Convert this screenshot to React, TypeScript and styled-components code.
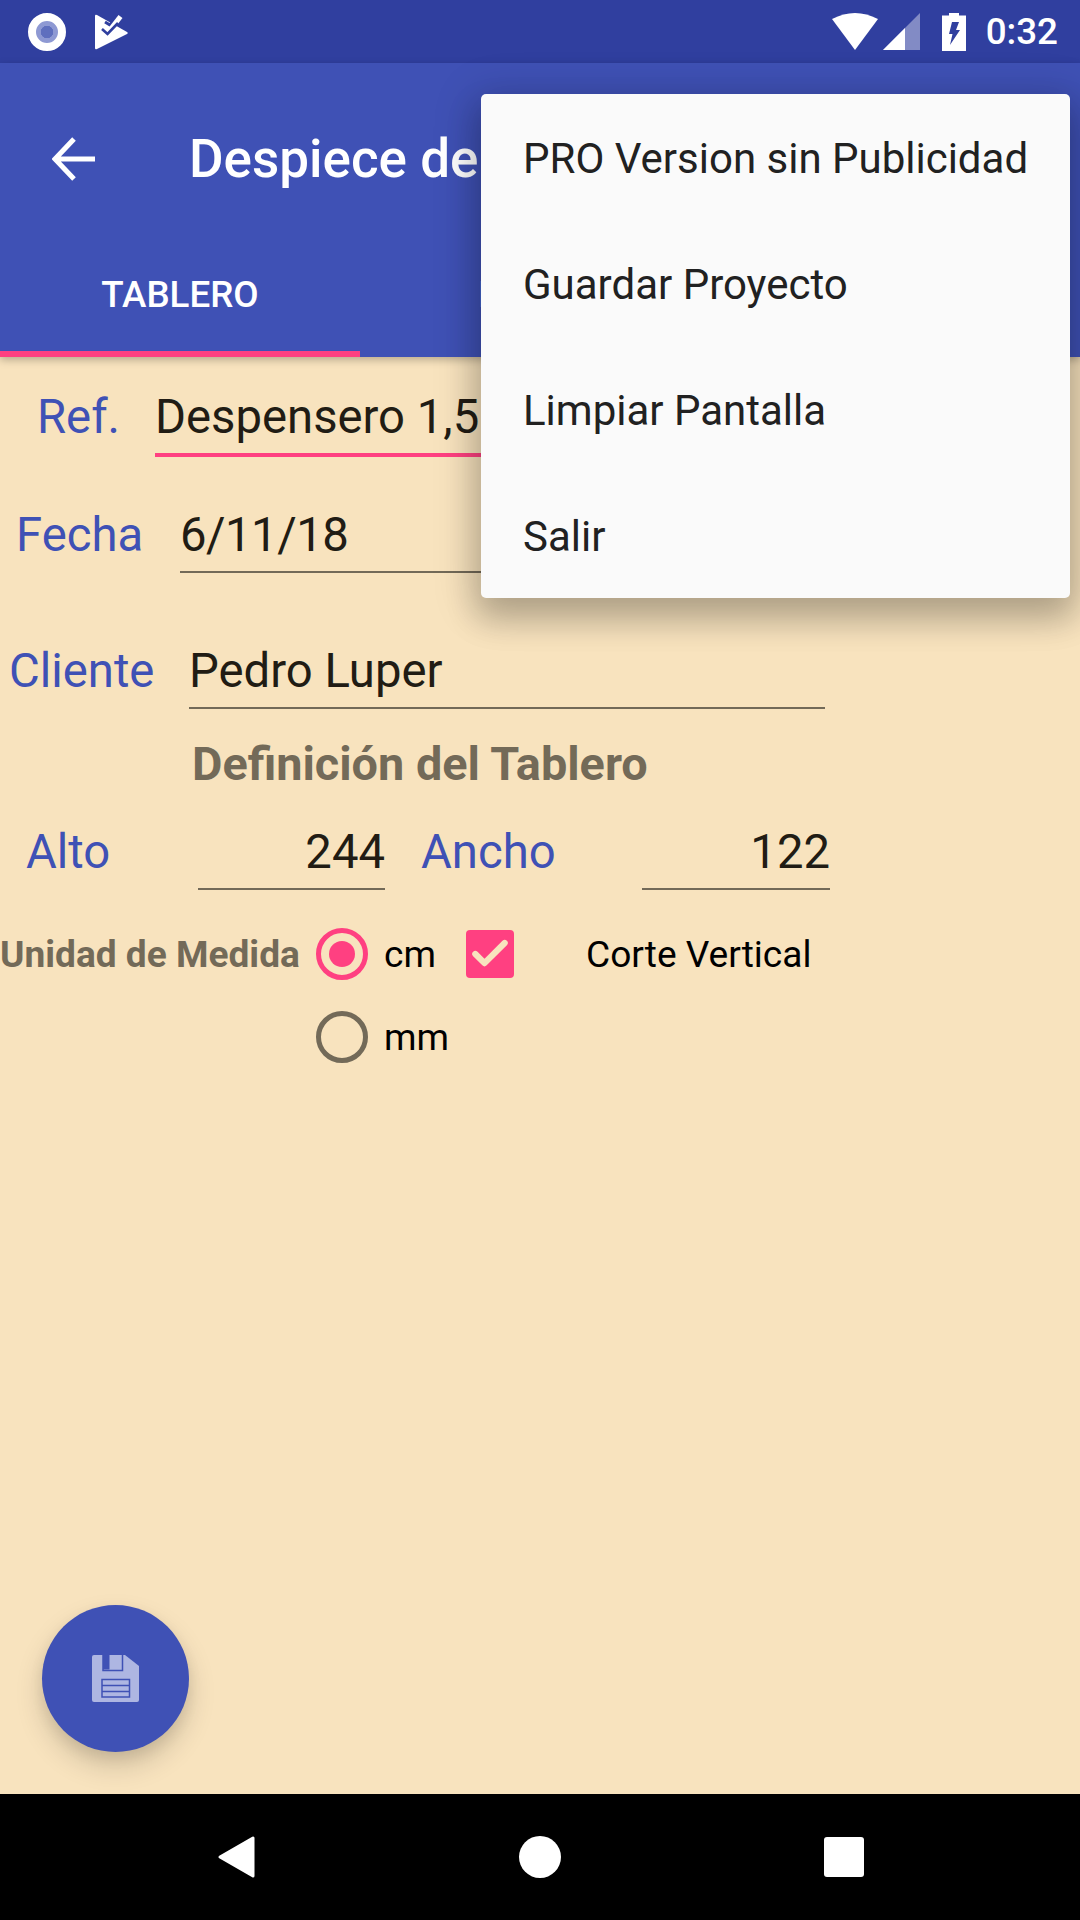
import styled, { createGlobalStyle } from 'styled-components'
import { Check } from 'lucide-react'

const Global = createGlobalStyle`
  html, body {
    margin: 0;
    padding: 0;
    background: #000;
  }
  * {
    box-sizing: border-box;
  }
`

const INDIGO = '#3F51B5'
const PINK = '#FF4081'
const OLIVE = '#736A58'

const menuItems = ['PRO Version sin Publicidad', 'Guardar Proyecto', 'Limpiar Pantalla', 'Salir']

const App = () => {
  return (
    <Screen>
      <Global />
      <StatusBar>
        <RingIcon />
        <TaskIcon width="33" height="36" viewBox="0 0 33 36">
          <path d="M0 2 Q0 0 2 1 L32 18 Q33.500 19 32 20 L2 35 Q0 36 0 34 Z" fill="#fff" />
          <path d="M10 8 L15 11 L22 2" fill="none" stroke="#303F9F" strokeWidth="3" />
          <path d="M15 16 L25.500 2.500" fill="none" stroke="#fff" strokeWidth="5" />
          <path d="M7 15 L12.500 20 L23 9" fill="none" stroke="#303F9F" strokeWidth="2.600" />
        </TaskIcon>
        <StatusRight>
          <svg width="46" height="37" viewBox="0 0 46 37">
            <path d="M0 6 Q23 -6 46 6 L23 37 Z" fill="#fff" />
          </svg>
          <SignalIcon width="37" height="37" viewBox="0 0 37 37">
            <path d="M0 37 L37 0 V37 Z" fill="#fff" fillOpacity=".4" />
            <path d="M0 37 L22 15 V37 Z" fill="#fff" />
          </SignalIcon>
          <BatteryIcon width="24" height="38" viewBox="0 0 24 38">
            <path d="M7 0 H17 V2.500 H24 V38 H0 V2.500 H7 Z" fill="#fff" />
            <path d="M10 9 H17 L14 17 H18 L8 32 L10.500 21 H7 Z" fill="#303F9F" />
          </BatteryIcon>
          <Clock>0:32</Clock>
        </StatusRight>
      </StatusBar>

      <AppBar>
        <Toolbar>
          <BackArrow width="43" height="44" viewBox="0 0 43 44">
            <path d="M2 22 H43 M22 2 L3 22 L22 42" fill="none" stroke="#fff" strokeWidth="5" />
          </BackArrow>
          <Title>Despiece de</Title>
        </Toolbar>
        <Tabs>
          <Tab $active>TABLERO</Tab>
          <Tab>PIEZAS</Tab>
          <Tab />
        </Tabs>
      </AppBar>

      <Content>
        <Row $top={24} $left={37}>
          <Label $width={118}>Ref.</Label>
          <Field $width={670} $focused>Despensero 1,50</Field>
        </Row>
        <Row $top={42} $left={16}>
          <Label $width={164}>Fecha</Label>
          <Field $width={645} $tight>6/11/18</Field>
        </Row>
        <Row $top={62} $left={9}>
          <Label $width={180}>Cliente</Label>
          <Field $width={636}>Pedro Luper</Field>
        </Row>
        <SectionTitle>Definición del Tablero</SectionTitle>
        <Row $top={22} $left={26}>
          <Label $width={172}>Alto</Label>
          <Field $width={187} $right>244</Field>
          <Label $width={257} $indent={36}>Ancho</Label>
          <Field $width={188} $right>122</Field>
        </Row>
        <OptionRow $top={38}>
          <UnitLabel>Unidad de Medida</UnitLabel>
          <Radio $checked />
          <OptionText $width={82}>cm</OptionText>
          <CheckBox>
            <Check size={44} color="#F8E3BE" strokeWidth={3.4} />
          </CheckBox>
          <OptionText $width={300} $indent={72}>Corte Vertical</OptionText>
        </OptionRow>
        <OptionRow $top={31}>
          <UnitSpacer />
          <Radio />
          <OptionText $width={82}>mm</OptionText>
        </OptionRow>
        <Fab>
          <svg width="47" height="47" viewBox="0 0 47 47">
            <path d="M2 0 H33 L47 11 V45 Q47 47 45 47 H2 Q0 47 0 45 V2 Q0 0 2 0 Z" fill="#AEB6E2" />
            <path d="M11 0 V15.500 H30.500 V0" fill="none" stroke={INDIGO} strokeWidth="1.500" />
            <path d="M11 0 H17.500 V14.500 H11 Z" fill={INDIGO} />
            <path d="M10 24.500 H37.500 V42 H10 Z M10 30.500 H37.500 M10 36.500 H37.500" fill="none" stroke={INDIGO} strokeWidth="1.500" />
          </svg>
        </Fab>
      </Content>

      <NavBar>
        <NavSlot>
          <svg width="38" height="44" viewBox="0 0 38 44">
            <path d="M36 3 V41 L3 22 Z" fill="#fff" stroke="#fff" strokeWidth="3" strokeLinejoin="round" />
          </svg>
        </NavSlot>
        <NavSlot>
          <HomeDot />
        </NavSlot>
        <NavSlot>
          <RecentSquare />
        </NavSlot>
      </NavBar>

      <Menu>
        {menuItems.map((item) => (
          <MenuItem key={item}>{item}</MenuItem>
        ))}
      </Menu>
    </Screen>
  )
}

const Screen = styled.div`
  position: relative;
  width: 1080px;
  height: 1920px;
  display: flex;
  flex-direction: column;
  overflow: hidden;
  background: #f8e3be;
  font-family: Roboto, "Noto Sans", sans-serif;
`

const StatusBar = styled.div`
  height: 63px;
  flex: none;
  display: flex;
  align-items: center;
  padding: 0 22px 0 28px;
  background: #303f9f;
`

const RingIcon = styled.div`
  width: 38px;
  height: 38px;
  border-radius: 50%;
  border: 8px solid #fff;
  background: radial-gradient(circle, #5f6fbe 0 6px, #8e99d3 6.500px);
`

const TaskIcon = styled.svg`
  margin-left: 29px;
`

const StatusRight = styled.div`
  margin-left: auto;
  display: flex;
  align-items: center;
`

const SignalIcon = styled.svg`
  margin-left: 5px;
`

const BatteryIcon = styled.svg`
  margin-left: 22px;
`

const Clock = styled.span`
  margin-left: 20px;
  color: #fff;
  font-size: 36.750px;
  font-weight: 500;
  line-height: 63px;
`

const AppBar = styled.div`
  position: relative;
  z-index: 1;
  height: 294px;
  flex: none;
  display: flex;
  flex-direction: column;
  background: ${INDIGO};
  box-shadow: 0 3px 8px rgba(0, 0, 0, 0.25);
`

const Toolbar = styled.div`
  height: 168px;
  display: flex;
  align-items: center;
  padding: 23px 0 0 52px;
`

const BackArrow = styled.svg`
  flex: none;
`

const Title = styled.div`
  margin-left: 94px;
  color: #fff;
  font-size: 53px;
  font-weight: 500;
  white-space: nowrap;
`

const Tabs = styled.div`
  height: 126px;
  display: grid;
  grid-template-columns: repeat(3, 360px);
`

const Tab = styled.div<{ $active?: boolean }>`
  display: flex;
  align-items: center;
  justify-content: center;
  color: ${(p) => (p.$active ? '#fff' : 'rgba(255, 255, 255, 0.7)')};
  font-size: 36.750px;
  font-weight: 500;
  border-bottom: 6px solid ${(p) => (p.$active ? PINK : 'transparent')};
  padding-top: 6px;
`

const Content = styled.div`
  position: relative;
  flex: 1;
  display: flex;
  flex-direction: column;
`

const Row = styled.div<{ $top: number; $left: number }>`
  display: flex;
  margin-top: ${(p) => p.$top}px;
  padding-left: ${(p) => p.$left}px;
`

const Label = styled.div<{ $width: number; $indent?: number }>`
  flex: none;
  width: ${(p) => p.$width}px;
  padding-left: ${(p) => p.$indent || 0}px;
  color: ${INDIGO};
  font-size: 47.250px;
  line-height: 72px;
`

const Field = styled.div<{ $width: number; $focused?: boolean; $right?: boolean; $tight?: boolean }>`
  flex: none;
  width: ${(p) => p.$width}px;
  color: #211c14;
  font-size: 47.250px;
  letter-spacing: ${(p) => (p.$tight ? '-0.5px' : 'normal')};
  line-height: 72px;
  white-space: nowrap;
  text-align: ${(p) => (p.$right ? 'right' : 'left')};
  border-bottom: ${(p) => (p.$focused ? `4px solid ${PINK}` : `2px solid ${OLIVE}`)};
`

const SectionTitle = styled.div`
  margin: 25px 0 0 192px;
  color: ${OLIVE};
  font-size: 46.800px;
  font-weight: 700;
  line-height: 60px;
`

const OptionRow = styled.div<{ $top: number }>`
  display: flex;
  align-items: center;
  height: 52px;
  margin-top: ${(p) => p.$top}px;
`

const UnitLabel = styled.div`
  flex: none;
  width: 316px;
  color: ${OLIVE};
  font-size: 37.100px;
  font-weight: 700;
  white-space: nowrap;
`

const UnitSpacer = styled.div`
  flex: none;
  width: 316px;
`

const Radio = styled.div<{ $checked?: boolean }>`
  flex: none;
  width: 52px;
  height: 52px;
  border-radius: 50%;
  border: 5px solid ${(p) => (p.$checked ? PINK : OLIVE)};
  padding: 8px;
  background: ${(p) => (p.$checked ? PINK : 'transparent')};
  background-clip: content-box;
`

const OptionText = styled.div<{ $width: number; $indent?: number }>`
  flex: none;
  width: ${(p) => p.$width}px;
  margin-left: ${(p) => (p.$indent ? p.$indent : 16)}px;
  color: #000;
  font-size: 37.100px;
  white-space: nowrap;
`

const CheckBox = styled.div`
  flex: none;
  width: 48px;
  height: 48px;
  display: flex;
  align-items: center;
  justify-content: center;
  border-radius: 4px;
  background: ${PINK};
`

const Fab = styled.div`
  position: absolute;
  left: 42px;
  bottom: 42px;
  width: 147px;
  height: 147px;
  display: flex;
  align-items: center;
  justify-content: center;
  border-radius: 50%;
  background: ${INDIGO};
  box-shadow: 0 14px 28px rgba(0, 0, 0, 0.16), 0 6px 14px rgba(0, 0, 0, 0.08);
`

const NavBar = styled.div`
  height: 126px;
  flex: none;
  display: flex;
  justify-content: center;
  gap: 184px;
  background: #000;
`

const NavSlot = styled.div`
  width: 120px;
  display: flex;
  align-items: center;
  justify-content: center;
`

const HomeDot = styled.div`
  width: 42px;
  height: 42px;
  border-radius: 50%;
  background: #fff;
`

const RecentSquare = styled.div`
  width: 40px;
  height: 40px;
  border-radius: 3px;
  background: #fff;
`

const Menu = styled.div`
  position: absolute;
  z-index: 2;
  top: 94px;
  left: 481px;
  width: 589px;
  height: 504px;
  display: flex;
  flex-direction: column;
  border-radius: 5px;
  background: #fafafa;
  box-shadow: 0 18px 32px 4px rgba(0, 0, 0, 0.2), 0 6px 44px 8px rgba(0, 0, 0, 0.14);
`

const MenuItem = styled.div`
  height: 126px;
  display: flex;
  align-items: center;
  padding: 2px 0 0 42px;
  color: #212121;
  font-size: 42px;
  white-space: nowrap;
`

export default App
